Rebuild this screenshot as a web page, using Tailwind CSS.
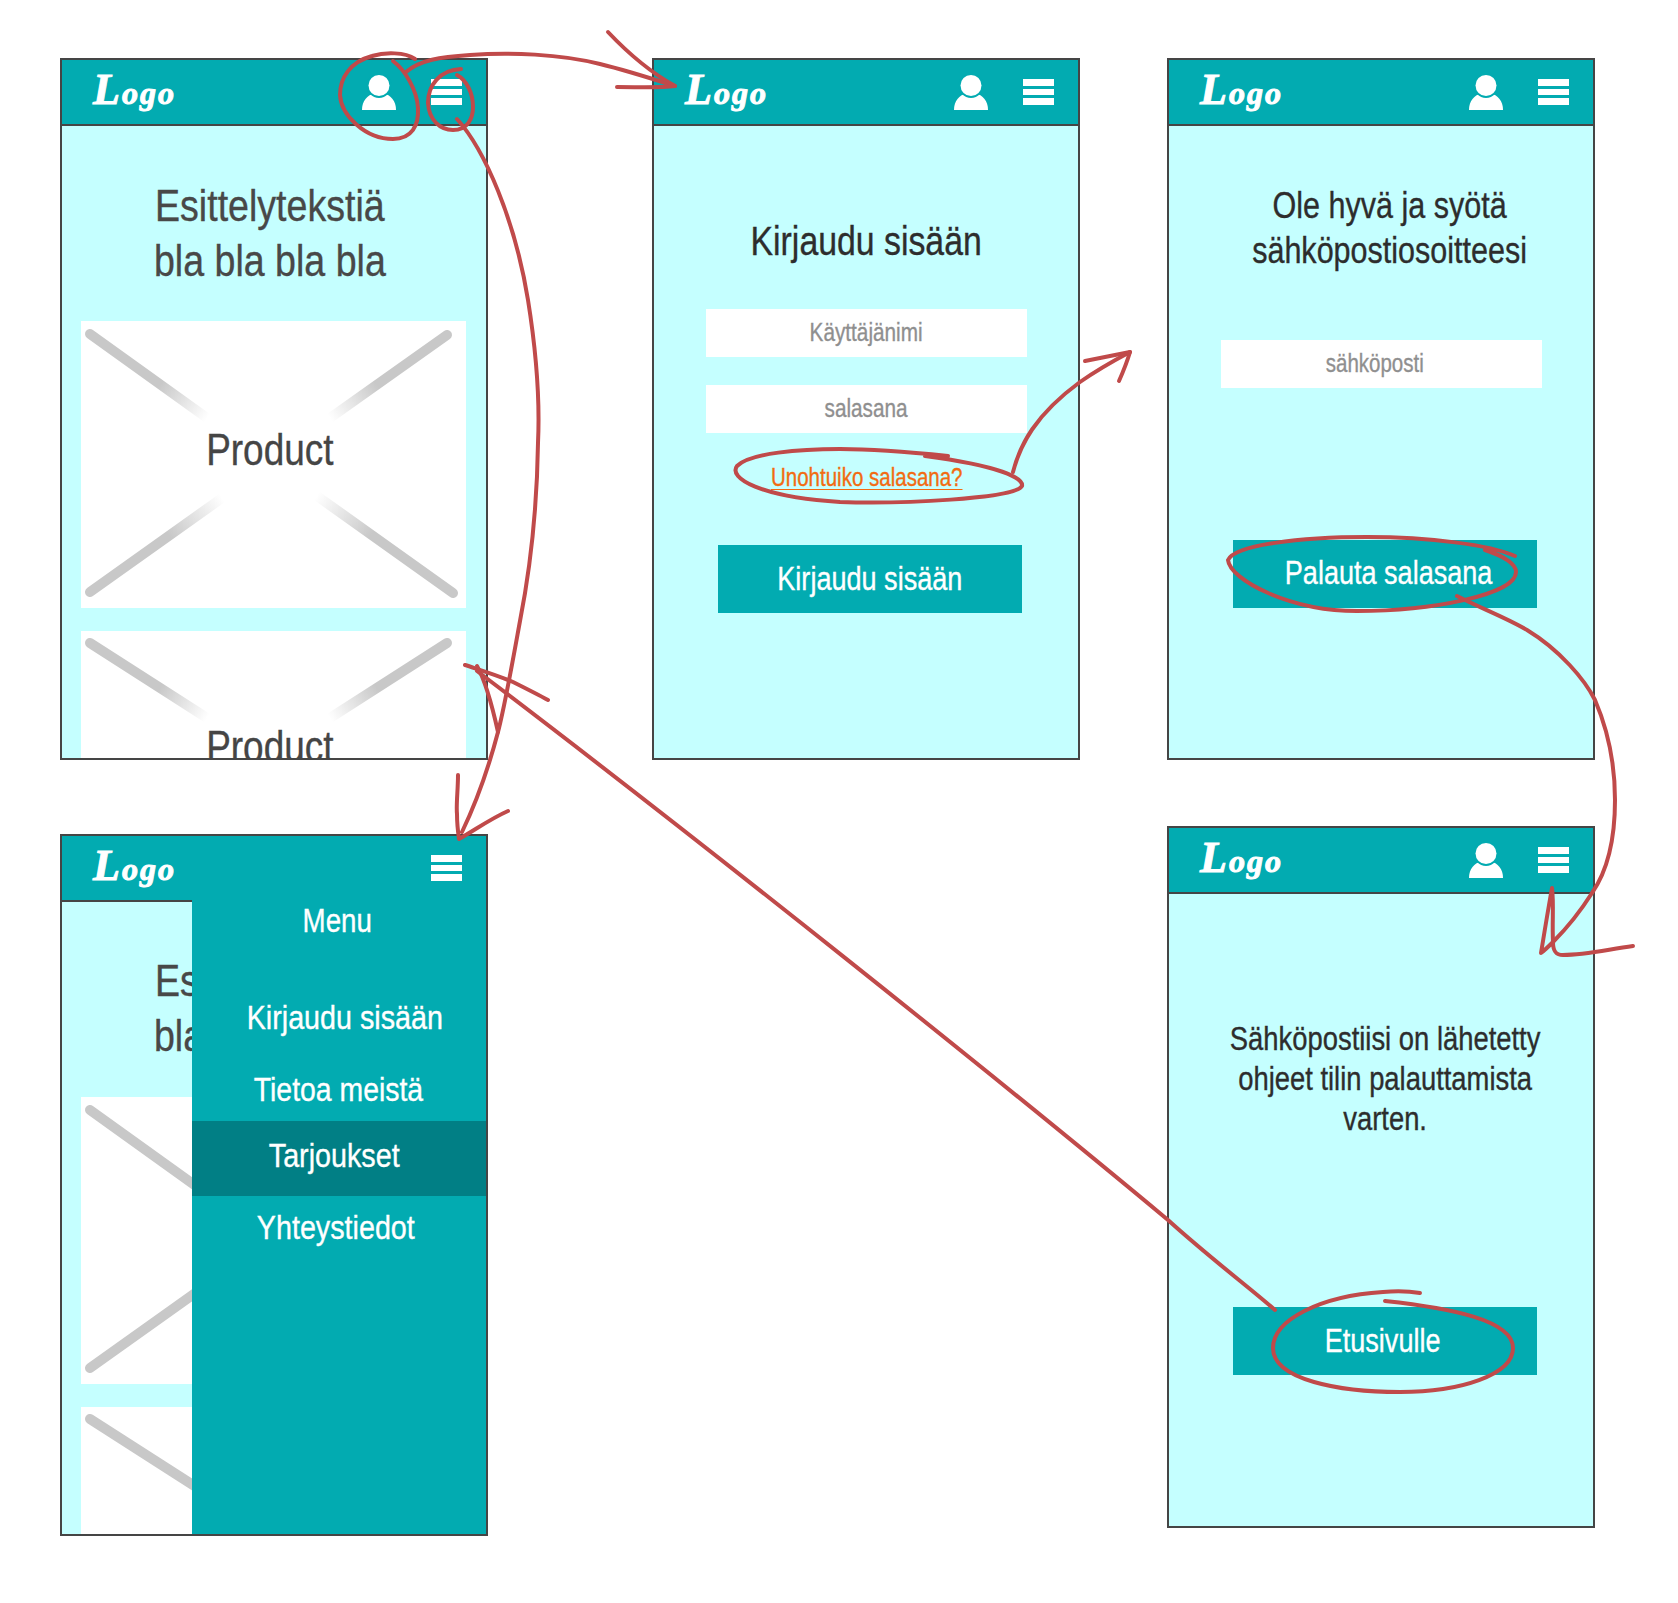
<!DOCTYPE html>
<html lang="fi">
<head>
<meta charset="UTF-8">
<title>Wireframe</title>
<script src="https://cdn.jsdelivr.net/npm/@tailwindcss/browser@4"></script>
</head>
<body class="bg-white font-['Liberation_Sans',sans-serif]">
<div class="relative w-[1678px] h-[1603px] overflow-hidden flex items-start pl-[60px] pt-[58px] [-webkit-text-stroke:0.35px_currentColor]">

  <!-- left column -->
  <div class="flex flex-col w-[428px]">
    <!-- home -->
    <div class="relative w-[428px] h-[702px] border-2 border-[#454545] bg-[#c5ffff] overflow-hidden">
      <header class="h-[66px] bg-[#02abb1] border-b-2 border-[#454545] flex items-center justify-between pl-[31px] pr-[24px]">
        <span class="-translate-y-[2px] text-white font-['Liberation_Serif',serif] font-bold italic leading-none tracking-[2px] [-webkit-text-stroke:1px_white]"><span class="text-[44px]">L</span><span class="text-[32px]">ogo</span></span>
        <div class="flex items-center gap-[35px]">
          <svg class="w-[34px] h-[35px]" viewBox="0 0 34 35"><path d="M0 35C0 26 5 20 13 18H21C29 20 34 26 34 35Z" fill="#fff"/><circle cx="17" cy="10.5" r="12.5" fill="#02abb1"/><circle cx="17" cy="10.5" r="10.5" fill="#fff"/></svg>
          <div class="flex flex-col gap-[3px] w-[31px]"><i class="block h-[6.5px] bg-white"></i><i class="block h-[6.5px] bg-white"></i><i class="block h-[6.5px] bg-white"></i></div>
        </div>
      </header>
      <h1 class="pt-[52px] pr-[9px] text-center text-[45px] leading-[55px] text-[#484848]"><span class="inline-block scale-x-[.835]">Esittelytekstiä<br>bla bla bla bla</span></h1>
      <div class="relative mt-[33px] ml-[19px] w-[385px] h-[287px] bg-white">
        <svg class="absolute inset-0" width="385" height="287" fill="none" stroke-width="10" stroke-linecap="round">
          <defs>
            <linearGradient id="a1" gradientUnits="userSpaceOnUse" x1="9" y1="13" x2="126" y2="97"><stop offset=".6" stop-color="#c8c8c8"/><stop offset="1" stop-color="#fff"/></linearGradient>
            <linearGradient id="a2" gradientUnits="userSpaceOnUse" x1="366" y1="14" x2="249" y2="97"><stop offset=".6" stop-color="#c8c8c8"/><stop offset="1" stop-color="#fff"/></linearGradient>
            <linearGradient id="a3" gradientUnits="userSpaceOnUse" x1="9" y1="271" x2="141" y2="177"><stop offset=".6" stop-color="#c8c8c8"/><stop offset="1" stop-color="#fff"/></linearGradient>
            <linearGradient id="a4" gradientUnits="userSpaceOnUse" x1="372" y1="272" x2="236" y2="175"><stop offset=".6" stop-color="#c8c8c8"/><stop offset="1" stop-color="#fff"/></linearGradient>
          </defs>
          <path d="M9 13L126 97" stroke="url(#a1)"/><path d="M366 14L249 97" stroke="url(#a2)"/><path d="M9 271L141 177" stroke="url(#a3)"/><path d="M372 272L236 175" stroke="url(#a4)"/>
        </svg>
        <p class="relative pt-[104px] pr-[7px] text-center text-[44px] leading-[50px] text-[#454545]"><span class="inline-block scale-x-[.84]">Product</span></p>
      </div>
      <div class="relative mt-[23px] ml-[19px] w-[385px] h-[287px] bg-white">
        <svg class="absolute inset-0" width="385" height="287" fill="none" stroke-width="10" stroke-linecap="round">
          <defs>
            <linearGradient id="b1" gradientUnits="userSpaceOnUse" x1="9" y1="12" x2="126" y2="87"><stop offset=".6" stop-color="#c8c8c8"/><stop offset="1" stop-color="#fff"/></linearGradient>
            <linearGradient id="b2" gradientUnits="userSpaceOnUse" x1="366" y1="12" x2="249" y2="87"><stop offset=".6" stop-color="#c8c8c8"/><stop offset="1" stop-color="#fff"/></linearGradient>
          </defs>
          <path d="M9 12L126 87" stroke="url(#b1)"/><path d="M366 12L249 87" stroke="url(#b2)"/>
        </svg>
        <p class="relative pt-[91px] pr-[7px] text-center text-[44px] leading-[50px] text-[#454545]"><span class="inline-block scale-x-[.84]">Product</span></p>
      </div>
    </div>

    <!-- home with menu open -->
    <div class="relative mt-[74px] w-[428px] h-[702px] border-2 border-[#454545] bg-[#c5ffff] overflow-hidden">
      <header class="h-[66px] bg-[#02abb1] border-b-2 border-[#454545] flex items-center pl-[31px]">
        <span class="-translate-y-[2px] text-white font-['Liberation_Serif',serif] font-bold italic leading-none tracking-[2px] [-webkit-text-stroke:1px_white]"><span class="text-[44px]">L</span><span class="text-[32px]">ogo</span></span>
      </header>
      <h2 class="pt-[51px] pr-[9px] text-center text-[45px] leading-[55px] text-[#484848]"><span class="inline-block scale-x-[.835]">Esittelytekstiä<br>bla bla bla bla</span></h2>
      <div class="relative mt-[34px] ml-[19px] w-[385px] h-[287px] bg-white">
        <svg class="absolute inset-0" width="385" height="287" fill="none" stroke-width="10" stroke-linecap="round">
          <path d="M9 13L126 97" stroke="#c8c8c8"/><path d="M9 271L141 177" stroke="#c8c8c8"/>
        </svg>
      </div>
      <div class="relative mt-[23px] ml-[19px] w-[385px] h-[287px] bg-white">
        <svg class="absolute inset-0" width="385" height="287" fill="none" stroke-width="10" stroke-linecap="round">
          <path d="M9 12L126 87" stroke="#c8c8c8"/>
        </svg>
      </div>
      <nav class="absolute top-0 bottom-0 right-0 w-[294px] bg-[#02abb1] text-white text-[33px] leading-[40px] text-center">
        <div class="h-[64px] flex items-center justify-end pr-[24px]">
          <div class="flex flex-col gap-[3px] w-[31px]"><i class="block h-[6.5px] bg-white"></i><i class="block h-[6.5px] bg-white"></i><i class="block h-[6.5px] bg-white"></i></div>
        </div>
        <div class="mt-[1px] pr-[3px]"><span class="inline-block scale-x-[.84]">Menu</span></div>
        <div class="mt-[57px] pl-[12px]"><span class="inline-block scale-x-[.87]">Kirjaudu sisään</span></div>
        <div class="mt-[32px] pr-[2px]"><span class="inline-block scale-x-[.86]">Tietoa meistä</span></div>
        <div class="mt-[11px] h-[75px] flex items-center justify-center pb-[5px] pr-[9px] bg-[#017f85]"><span class="scale-x-[.87]">Tarjoukset</span></div>
        <div class="mt-[12px] pr-[7px]"><span class="inline-block scale-x-[.87]">Yhteystiedot</span></div>
      </nav>
    </div>
  </div>

  <!-- login -->
  <div class="ml-[164px] w-[428px] h-[702px] border-2 border-[#454545] bg-[#c5ffff] overflow-hidden">
    <header class="h-[66px] bg-[#02abb1] border-b-2 border-[#454545] flex items-center justify-between pl-[31px] pr-[24px]">
      <span class="-translate-y-[2px] text-white font-['Liberation_Serif',serif] font-bold italic leading-none tracking-[2px] [-webkit-text-stroke:1px_white]"><span class="text-[44px]">L</span><span class="text-[32px]">ogo</span></span>
      <div class="flex items-center gap-[35px]">
        <svg class="w-[34px] h-[35px]" viewBox="0 0 34 35"><path d="M0 35C0 26 5 20 13 18H21C29 20 34 26 34 35Z" fill="#fff"/><circle cx="17" cy="10.5" r="12.5" fill="#02abb1"/><circle cx="17" cy="10.5" r="10.5" fill="#fff"/></svg>
        <div class="flex flex-col gap-[3px] w-[31px]"><i class="block h-[6.5px] bg-white"></i><i class="block h-[6.5px] bg-white"></i><i class="block h-[6.5px] bg-white"></i></div>
      </div>
    </header>
    <h2 class="pt-[90px] text-center text-[41px] leading-[50px] text-[#2d2d2d]"><span class="inline-block scale-x-[.825]">Kirjaudu sisään</span></h2>
    <div class="mt-[43px] ml-[52px] w-[321px] h-[48px] bg-white flex items-center justify-center text-[25px] text-[#8f8f8f]"><span class="scale-x-[.83]">Käyttäjänimi</span></div>
    <div class="mt-[28px] ml-[52px] w-[321px] h-[48px] bg-white flex items-center justify-center text-[25px] text-[#8f8f8f]"><span class="scale-x-[.83]">salasana</span></div>
    <div class="mt-[29px] pl-[2px] text-center text-[25px] leading-[30px]"><a class="inline-block scale-x-[.82] text-[#f26b12] underline underline-offset-[3px] decoration-1">Unohtuiko salasana?</a></div>
    <div class="mt-[53px] ml-[64px] w-[304px] h-[68px] bg-[#02abb1] flex items-center justify-center pb-[1px] text-[33px] text-white"><span class="scale-x-[.82]">Kirjaudu sisään</span></div>
  </div>

  <!-- right column -->
  <div class="ml-[87px] flex flex-col w-[428px]">
    <div class="w-[428px] h-[702px] border-2 border-[#454545] bg-[#c5ffff] overflow-hidden">
      <header class="h-[66px] bg-[#02abb1] border-b-2 border-[#454545] flex items-center justify-between pl-[31px] pr-[24px]">
        <span class="-translate-y-[2px] text-white font-['Liberation_Serif',serif] font-bold italic leading-none tracking-[2px] [-webkit-text-stroke:1px_white]"><span class="text-[44px]">L</span><span class="text-[32px]">ogo</span></span>
        <div class="flex items-center gap-[35px]">
          <svg class="w-[34px] h-[35px]" viewBox="0 0 34 35"><path d="M0 35C0 26 5 20 13 18H21C29 20 34 26 34 35Z" fill="#fff"/><circle cx="17" cy="10.5" r="12.5" fill="#02abb1"/><circle cx="17" cy="10.5" r="10.5" fill="#fff"/></svg>
          <div class="flex flex-col gap-[3px] w-[31px]"><i class="block h-[6.5px] bg-white"></i><i class="block h-[6.5px] bg-white"></i><i class="block h-[6.5px] bg-white"></i></div>
        </div>
      </header>
      <h2 class="pt-[57px] pl-[18px] text-center text-[37px] leading-[45px] text-[#2d2d2d]"><span class="inline-block scale-x-[.825]">Ole hyvä ja syötä<br>sähköpostiosoitteesi</span></h2>
      <div class="mt-[67px] ml-[52px] w-[321px] h-[48px] bg-white flex items-center justify-center pr-[14px] text-[25px] text-[#8f8f8f]"><span class="scale-x-[.82]">sähköposti</span></div>
      <div class="mt-[152px] ml-[64px] w-[304px] h-[68px] bg-[#02abb1] flex items-center justify-center pl-[8px] pb-[2px] text-[33px] text-white"><span class="scale-x-[.82]">Palauta salasana</span></div>
    </div>

    <div class="mt-[66px] w-[428px] h-[702px] border-2 border-[#454545] bg-[#c5ffff] overflow-hidden">
      <header class="h-[66px] bg-[#02abb1] border-b-2 border-[#454545] flex items-center justify-between pl-[31px] pr-[24px]">
        <span class="-translate-y-[2px] text-white font-['Liberation_Serif',serif] font-bold italic leading-none tracking-[2px] [-webkit-text-stroke:1px_white]"><span class="text-[44px]">L</span><span class="text-[32px]">ogo</span></span>
        <div class="flex items-center gap-[35px]">
          <svg class="w-[34px] h-[35px]" viewBox="0 0 34 35"><path d="M0 35C0 26 5 20 13 18H21C29 20 34 26 34 35Z" fill="#fff"/><circle cx="17" cy="10.5" r="12.5" fill="#02abb1"/><circle cx="17" cy="10.5" r="10.5" fill="#fff"/></svg>
          <div class="flex flex-col gap-[3px] w-[31px]"><i class="block h-[6.5px] bg-white"></i><i class="block h-[6.5px] bg-white"></i><i class="block h-[6.5px] bg-white"></i></div>
        </div>
      </header>
      <p class="pt-[125px] pl-[8px] text-center text-[33px] leading-[40px] text-[#2d2d2d]"><span class="inline-block scale-x-[.83]">Sähköpostiisi on lähetetty<br>ohjeet tilin palauttamista<br>varten.</span></p>
      <div class="mt-[168px] ml-[64px] w-[304px] h-[68px] bg-[#02abb1] flex items-center justify-center pr-[4px] pb-[1px] text-[33px] text-white"><span class="scale-x-[.82]">Etusivulle</span></div>
    </div>
  </div>

  <!-- hand drawn annotations on top of the screens -->
  <svg class="absolute inset-0 pointer-events-none" width="1678" height="1603" fill="none" stroke="#c04a4a" stroke-width="4" stroke-linecap="round" stroke-linejoin="round">
    <path d="M415 59C405 52 385 52 372 56C350 62 340 78 340 95C341 115 365 139 393 139C412 139 419 125 418 108C417 90 405 70 393 61"/>
    <path d="M406 72C420 60 440 57 470 55C510 52 560 54 600 64C625 70 650 78 675 86"/>
    <path d="M608 32C625 50 650 72 675 86C660 88 640 87 617 87"/>
    <path d="M461 69C440 70 428 85 428 103C429 120 440 130 453 130C468 130 473 118 473 107C473 92 466 80 457 75"/>
    <path d="M457 119C485 150 515 220 528 300C536 350 540 400 538 443C537 510 530 570 520 621C512 665 505 705 498 732C488 770 475 805 462 832"/>
    <path d="M458 775C458 790 456 805 457 814C457 825 458 832 459 839C475 830 490 819 508 811"/>
    <path d="M1275 1310C1250 1288 1210 1258 1168 1220C1000 1080 700 840 477 671"/>
    <path d="M465 665C480 670 497 675 513 682C525 688 537 694 548 700"/>
    <path d="M477 666C485 680 492 705 498 732"/>
    <path d="M948 456C900 451 870 449 840 449C800 449 750 453 737 466C728 478 760 497 840 502C900 504 1015 499 1022 486C1024 478 1000 466 925 456"/>
    <path d="M1013 472C1020 445 1035 415 1080 382C1100 368 1115 360 1130 352"/>
    <path d="M1085 361C1100 358 1115 355 1130 352C1127 362 1123 372 1119 381"/>
    <path d="M1515 556C1490 545 1430 537 1367 537C1300 537 1235 545 1228 560C1230 580 1290 611 1357 611C1430 611 1516 595 1516 572C1516 562 1500 555 1485 550"/>
    <path d="M1457 596C1480 608 1505 617 1527 630C1560 650 1585 680 1595 700C1610 735 1615 770 1615 800C1615 840 1608 870 1592 893C1580 912 1565 930 1553 942"/>
    <path d="M1553 942C1552 920 1554 905 1552 888C1548 910 1544 935 1541 953C1545 950 1550 945 1553 942C1553 950 1555 955 1563 955C1585 955 1605 950 1633 946"/>
    <path d="M1420 1293C1408 1291 1395 1291 1383 1292C1320 1296 1273 1320 1273 1348C1273 1380 1340 1392 1400 1392C1460 1392 1513 1375 1513 1348C1513 1320 1450 1308 1385 1301"/>
  </svg>
</div>
</body>
</html>
